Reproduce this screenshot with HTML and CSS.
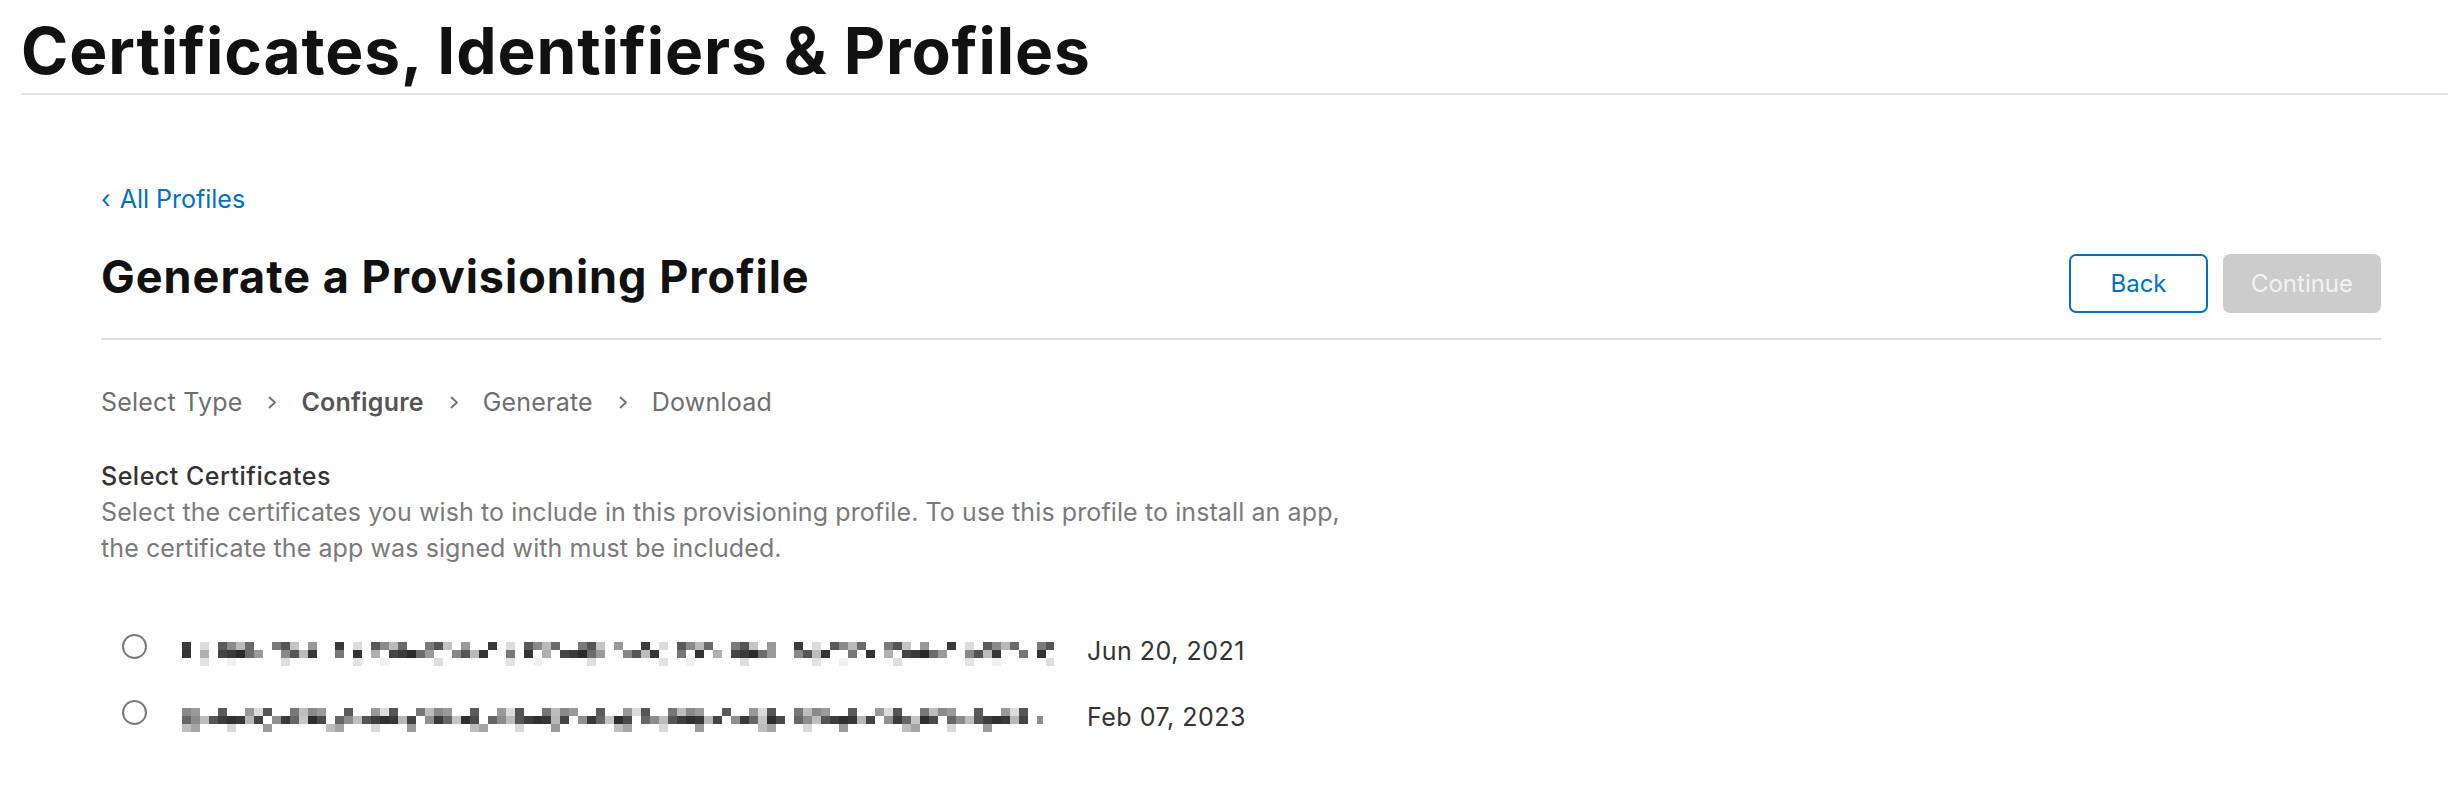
FILE: index.html
```html
<!DOCTYPE html>
<html lang="en">
<head>
<meta charset="utf-8">
<title>Certificates, Identifiers &amp; Profiles</title>
<link rel="stylesheet" href="styles.css">
</head>
<body>
<header class="site-header">
  <h1 class="site-title">Certificates, Identifiers &amp; Profiles</h1>
</header>
<main class="content">
  <a class="back-link" href="#"><span class="back-chev">‹</span> All Profiles</a>
  <div class="page-head">
    <h2 class="page-title">Generate a Provisioning Profile</h2>
    <div class="actions">
      <button class="btn btn-back">Back</button>
      <button class="btn btn-continue" disabled>Continue</button>
    </div>
  </div>
  <nav class="steps">
    <span class="step">Select Type</span>
    <svg class="chev" width="9" height="13" viewBox="0 0 9 13"><polyline points="1.5,1.5 7,6.5 1.5,11.5" fill="none" stroke="#6e6e6e" stroke-width="1.8" stroke-linecap="round" stroke-linejoin="round"/></svg>
    <span class="step step-current">Configure</span>
    <svg class="chev" width="9" height="13" viewBox="0 0 9 13"><polyline points="1.5,1.5 7,6.5 1.5,11.5" fill="none" stroke="#6e6e6e" stroke-width="1.8" stroke-linecap="round" stroke-linejoin="round"/></svg>
    <span class="step">Generate</span>
    <svg class="chev" width="9" height="13" viewBox="0 0 9 13"><polyline points="1.5,1.5 7,6.5 1.5,11.5" fill="none" stroke="#6e6e6e" stroke-width="1.8" stroke-linecap="round" stroke-linejoin="round"/></svg>
    <span class="step">Download</span>
  </nav>
  <section class="section">
    <h3 class="section-title">Select Certificates</h3>
    <p class="section-desc">Select the certificates you wish to include in this provisioning profile. To use this profile to install an app,<br>the certificate the app was signed with must be included.</p>
  </section>
  <ul class="cert-list">
    <li class="cert-row">
      <span class="radio"></span>
      <span class="cert-name"><span class="mosaic mosaic-a" aria-label="redacted certificate name"></span></span>
      <span class="cert-date">Jun 20, 2021</span>
    </li>
    <li class="cert-row">
      <span class="radio"></span>
      <span class="cert-name"><span class="mosaic mosaic-b" aria-label="redacted certificate name"></span></span>
      <span class="cert-date">Feb 07, 2023</span>
    </li>
  </ul>
</main>
</body>
</html>
```
FILE: styles.css
```css
* { box-sizing: border-box; }
html, body { margin: 0; padding: 0; background: #fff; }
body {
  font-family: Inter, "Noto Sans", "Liberation Sans", sans-serif;
  color: #1d1d1f;
  width: 2448px;
  height: 786px;
  overflow: hidden;
}

.site-header {
  margin-left: 21px;
  padding-top: 19px;
  padding-bottom: 10px;
  border-bottom: 2px solid #e3e3e3;
}
.site-title {
  margin: 0;
  font-size: 64px;
  line-height: 64px;
  font-weight: 700;
  letter-spacing: 0.9px;
  color: #111;
}

.content {
  margin-left: 101px;
  width: 2280px;
}

.back-link {
  display: block;
  margin-top: 88px;
  font-size: 25px;
  line-height: 32px;
  color: #0070c9;
  text-decoration: none;
}
.back-chev { display: inline-block; margin-right: 2px; }

.page-head {
  display: flex;
  justify-content: space-between;
  align-items: flex-start;
  border-bottom: 2px solid #dedede;
  padding-bottom: 25px;
}
.page-title {
  margin: 36px 0 0 0;
  font-size: 45px;
  line-height: 52px;
  font-weight: 700;
  letter-spacing: 1px;
  color: #111;
}
.actions {
  display: flex;
  gap: 15px;
  margin-top: 39px;
}
.btn {
  height: 59px;
  padding: 0 24px;
  border-radius: 7px;
  font-family: inherit;
  font-size: 24px;
  line-height: 1;
  cursor: pointer;
}
.btn-back {
  min-width: 139px;
  background: #fff;
  border: 2px solid #0070c9;
  color: #0070c9;
}
.btn-continue {
  min-width: 158px;
  background: #cccccc;
  border: 2px solid #cccccc;
  color: #f2f2f2;
}

.steps {
  display: flex;
  align-items: center;
  margin-top: 46px;
  font-size: 25px;
  line-height: 32px;
  letter-spacing: 0.2px;
  color: #6e6e6e;
}
.step-current { font-weight: 600; color: #555; }
.chev { margin: 0 24px 0 26px; flex: none; }

.section { margin-top: 40px; }
.section-title {
  margin: 0;
  font-size: 25px;
  line-height: 36px;
  font-weight: 500;
  letter-spacing: 0.5px;
  color: #333;
}
.section-desc {
  margin: 0;
  font-size: 25px;
  line-height: 36px;
  letter-spacing: 0.1px;
  color: #7a7a7a;
}

.cert-list {
  list-style: none;
  margin: 52px 0 0 0;
  padding: 0;
}
.cert-row {
  display: grid;
  grid-template-columns: 25px 905px auto;
  column-gap: 35px;
  padding-left: 21px;
  height: 66px;
  align-items: start;
}
.cert-row .cert-name { margin-left: -35px; }
.radio {
  width: 25px;
  height: 25px;
  margin-top: 16px;
  border: 2px solid #7a7a7a;
  border-radius: 50%;
}
.cert-name {
  display: block;
  padding-top: 24px;
  padding-left: 35px;
}
.cert-date {
  margin-left: -35px;
  font-size: 25px;
  line-height: 32px;
  letter-spacing: 0.5px;
  padding-top: 17px;
  color: #333;
}

.mosaic {
  display: block;
  height: 24px;
}
.mosaic-a {
  width: 872px;
  background-image:
    repeating-linear-gradient(90deg,
      #3a3a3a 0 9px, #ffffff 9px 18px, #dcdcdc 18px 27px, #ffffff 27px 36px,
      #5a5a5a 36px 45px, #8a8a8a 45px 54px, #b9b9b9 54px 63px, #6a6a6a 63px 72px,
      #ffffff 72px 90px, #7a7a7a 90px 99px, #555 99px 108px, #c5c5c5 108px 117px,
      #ffffff 117px 126px, #999 126px 135px, #ffffff 135px 153px),
    repeating-linear-gradient(90deg,
      #333 0 9px, #ffffff 9px 18px, #b0b0b0 18px 27px, #ffffff 27px 36px,
      #454545 36px 45px, #3a3a3a 45px 54px, #2a2a2a 54px 63px, #6c6c6c 63px 72px,
      #9a9a9a 72px 81px, #ffffff 81px 99px, #888 99px 108px,
      #555 108px 117px, #bbb 117px 126px, #363636 126px 135px, #ffffff 135px 153px,
      #777 153px 162px, #ffffff 162px 171px),
    repeating-linear-gradient(90deg,
      #ffffff 0 18px, #e3e3e3 18px 27px, #ffffff 27px 45px, #f0f0f0 45px 54px,
      #ffffff 54px 99px, #dedede 99px 108px, #ffffff 108px 153px);
  background-position: 0 0, 0 8px, 0 16px;
  background-size: auto 8px, auto 8px, auto 8px;
  background-repeat: repeat-x, repeat-x, repeat-x;
}
.mosaic-b {
  width: 861px;
  background-image:
    repeating-linear-gradient(90deg,
      #8a8a8a 0 9px, #9a9a9a 9px 18px, #ffffff 18px 36px, #5a5a5a 36px 45px,
      #ffffff 45px 63px, #999 63px 72px, #dcdcdc 72px 81px, #555 81px 90px,
      #ffffff 90px 108px, #777 108px 117px, #bdbdbd 117px 126px),
    repeating-linear-gradient(90deg,
      #666 0 9px, #8c8c8c 9px 18px, #bdbdbd 18px 27px, #555 27px 36px,
      #3d3d3d 36px 45px, #303030 45px 54px, #383838 54px 63px, #b7b7b7 63px 72px,
      #444 72px 81px, #ffffff 81px 90px, #909090 90px 99px, #3a3a3a 99px 108px,
      #666 108px 117px, #c5c5c5 117px 126px, #2e2e2e 126px 135px, #4a4a4a 135px 144px,
      #ffffff 144px 153px),
    repeating-linear-gradient(90deg,
      #bdbdbd 0 9px, #a5a5a5 9px 18px, #ffffff 18px 45px, #d8d8d8 45px 54px,
      #ffffff 54px 81px, #9a9a9a 81px 90px, #ffffff 90px 144px);
  background-position: 0 0, 0 8px, 0 16px;
  background-size: auto 8px, auto 8px, auto 8px;
  background-repeat: repeat-x, repeat-x, repeat-x;
}
```
